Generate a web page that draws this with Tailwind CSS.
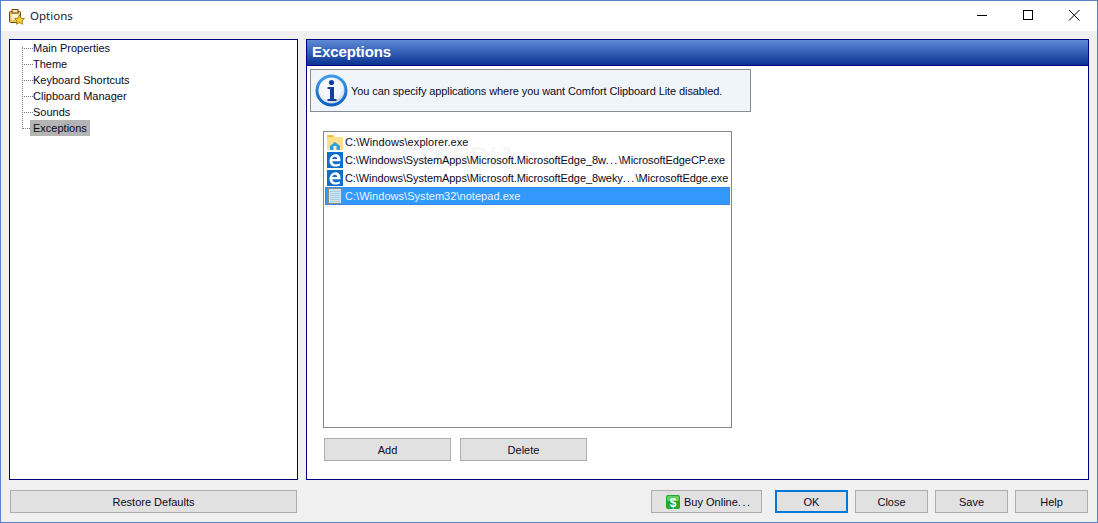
<!DOCTYPE html>
<html>
<head>
<meta charset="utf-8">
<script src="https://cdn.jsdelivr.net/npm/@tailwindcss/browser@4"></script>
</head>
<body class="m-0">
<div class="w-[1098px] h-[523px] flex flex-col overflow-hidden bg-[#f0f0f0] border border-[#5a82c6] font-['Liberation_Sans',sans-serif] text-[11px] text-[#0a0a1e]">
  <div class="h-[30px] shrink-0 bg-white flex items-center pl-[7px]">
    <svg width="17" height="17" viewBox="0 0 17 17" class="mr-[5px] shrink-0">
      <rect x="1.5" y="3.5" width="11" height="11" rx="1" fill="#e8c465" stroke="#6e4a12"/>
      <rect x="4" y="1.5" width="6" height="3.5" fill="#f4e4a8" stroke="#6e4a12"/>
      <rect x="3.5" y="6" width="7" height="6" fill="#fbf3d0"/>
      <path d="M11.5 7l1.6 3.2 3.4.4-2.5 2.3.7 3.4-3.2-1.7-3.2 1.7.7-3.4-2.5-2.3 3.4-.4z" fill="#f6cf2e" stroke="#9a6d10" stroke-width=".8"/>
    </svg>
    <span class="text-[11.5px] text-[#1a1a2e] font-['Noto_Sans',sans-serif]">Options</span>
    <div class="ml-auto flex items-start h-[30px]">
      <svg width="46" height="30" viewBox="0 0 46 30"><path d="M18 14.5h10" stroke="#000"/></svg>
      <svg width="46" height="30" viewBox="0 0 46 30"><rect x="18.500" y="9.500" width="9" height="9" fill="none" stroke="#000"/></svg>
      <svg width="46" height="30" viewBox="0 0 46 30"><path d="M18 9l10.500 10.500M28.500 9L18 19.500" stroke="#000"/></svg>
    </div>
  </div>
  <div class="flex-1 flex flex-col pt-[8px] pl-[8px] pr-[8px] pb-[9px]">
    <div class="flex gap-[8px] h-[441px]">
      <div class="w-[289px] shrink-0 bg-white border border-[#000080] relative">
        <div class="absolute left-[12px] top-[7px] h-[80px] border-l border-dotted border-[#777]"></div>
        <div class="flex flex-col">
          <div class="h-[16px] flex items-center"><span class="w-[11px] ml-[12px] border-t border-dotted border-[#777]"></span><span>Main Properties</span></div>
          <div class="h-[16px] flex items-center"><span class="w-[11px] ml-[12px] border-t border-dotted border-[#777]"></span><span>Theme</span></div>
          <div class="h-[16px] flex items-center"><span class="w-[11px] ml-[12px] border-t border-dotted border-[#777]"></span><span>Keyboard Shortcuts</span></div>
          <div class="h-[16px] flex items-center"><span class="w-[11px] ml-[12px] border-t border-dotted border-[#777]"></span><span>Clipboard Manager</span></div>
          <div class="h-[16px] flex items-center"><span class="w-[11px] ml-[12px] border-t border-dotted border-[#777]"></span><span>Sounds</span></div>
          <div class="h-[16px] flex items-center"><span class="w-[8px] ml-[12px] border-t border-dotted border-[#777]"></span><span class="bg-[#b4b4b4] h-[16px] w-[60px] pl-[3px] flex items-center">Exceptions</span></div>
        </div>
      </div>
      <div class="flex-1 bg-white border border-[#000080] flex flex-col">
        <div class="h-[26px] shrink-0 bg-gradient-to-b from-[#5f8ad6] to-[#0a3192] border-b border-[#000080] flex items-center pl-[5px] text-white font-bold text-[15px] tracking-[-0.1px]">Exceptions</div>
        <div class="flex-1 flex flex-col pl-[3px] pt-[3px]">
          <div class="w-[441px] h-[43px] bg-[#f0f5fb] border border-[#8a8a94] flex items-center pl-[4px]">
            <svg width="33" height="33" viewBox="0 0 33 33" class="mr-[3px] shrink-0">
              <defs>
                <radialGradient id="g1" cx="45%" cy="40%" r="60%"><stop offset="0" stop-color="#ffffff"/><stop offset=".7" stop-color="#eef3fa"/><stop offset="1" stop-color="#a9c0dc"/></radialGradient>
                <linearGradient id="g2" x1="0" y1="0" x2="0" y2="1"><stop offset="0" stop-color="#3f9be8"/><stop offset="1" stop-color="#0f5fc0"/></linearGradient>
              </defs>
              <circle cx="16.500" cy="16.500" r="14.500" fill="url(#g1)" stroke="url(#g2)" stroke-width="3"/>
              <circle cx="16.500" cy="8.500" r="2.600" fill="#14409a"/>
              <path d="M12.500 13h6.500v12h2.500v2h-9v-2h2.500v-10h-2.500z" fill="#14409a"/>
            </svg>
            <span class="whitespace-nowrap tracking-[-0.09px] pt-[1px]">You can specify applications where you want Comfort Clipboard Lite disabled.</span>
          </div>
          <div class="ml-[13px] mt-[19px] w-[409px] h-[297px] border border-[#828790] bg-white relative p-[1px] overflow-hidden">
            <div class="absolute left-[38px] top-[12px] text-[27px] font-bold text-[#f7f7f7] leading-none">SOFTPEDIA</div>
            <div class="relative flex flex-col">
              <div class="h-[18px] flex items-center pl-[2px]">
                <svg width="16" height="16" viewBox="0 0 16 16" class="mr-[2px] shrink-0"><path d="M0 1h6l2 2h8v13H0z" fill="#fde08a"/><path d="M0 1h6l1 2H0z" fill="#f3bd45"/><path d="M3 12l5-4 5 4v4H3z" fill="#2f9ee0"/><rect x="6.500" y="12" width="3" height="4" fill="#fff3c4"/></svg>
                <span class="whitespace-nowrap tracking-[0.08px]">C:\Windows\explorer.exe</span>
              </div>
              <div class="h-[18px] flex items-center pl-[2px]">
                <svg width="16" height="16" viewBox="0 0 16 16" class="mr-[2px] shrink-0"><rect width="16" height="16" fill="#0f6fc6"/><path d="M13.500 9.200H5.300c.2 2 1.700 3.100 3.800 3.100 1.400 0 2.800-.4 3.800-1.100v2.300c-1.100.7-2.800 1.100-4.400 1.100-3.700 0-6-2.200-6-5.600 0-3.700 2.700-6.800 6.100-6.800 3.200 0 4.900 2.400 4.900 5.600zM10.100 7c0-1.400-.9-2.300-2.200-2.300-1.300 0-2.300.9-2.600 2.300z" fill="#fff" fill-rule="evenodd"/></svg>
                <span class="whitespace-nowrap tracking-[-0.08px]">C:\Windows\SystemApps\Microsoft.MicrosoftEdge_8w<span class="tracking-[1.2px]">...</span>\MicrosoftEdgeCP.exe</span>
              </div>
              <div class="h-[18px] flex items-center pl-[2px]">
                <svg width="16" height="16" viewBox="0 0 16 16" class="mr-[2px] shrink-0"><rect width="16" height="16" fill="#0f6fc6"/><path d="M13.500 9.200H5.300c.2 2 1.700 3.100 3.800 3.100 1.400 0 2.800-.4 3.800-1.100v2.300c-1.100.7-2.800 1.100-4.400 1.100-3.700 0-6-2.200-6-5.600 0-3.700 2.700-6.800 6.100-6.800 3.200 0 4.900 2.400 4.900 5.600zM10.100 7c0-1.400-.9-2.300-2.200-2.300-1.300 0-2.300.9-2.600 2.300z" fill="#fff" fill-rule="evenodd"/></svg>
                <span class="whitespace-nowrap tracking-[-0.08px]">C:\Windows\SystemApps\Microsoft.MicrosoftEdge_8weky<span class="tracking-[1.2px]">...</span>\MicrosoftEdge.exe</span>
              </div>
              <div class="h-[18px] flex items-center pl-[1px] bg-[#3399ff] border border-dotted border-[#a06a20] text-[#eaf4ff]">
                <svg width="16" height="16" viewBox="0 0 16 16" class="mr-[2px] shrink-0"><rect x="1.500" y="0.500" width="13" height="15" fill="#cfe3f3" stroke="#8a8f78"/><path d="M3 3.500h10M3 5.500h10M3 7.500h10M3 9.500h10M3 11.500h10M3 13.500h10" stroke="#a9cce6"/></svg>
                <span class="whitespace-nowrap tracking-[0.04px]">C:\Windows\System32\notepad.exe</span>
              </div>
            </div>
          </div>
          <div class="ml-[14px] mt-[10px] flex gap-[9px]">
            <button class="w-[127px] h-[23px] pt-[1px] bg-[#e1e1e1] border border-[#adadad]">Add</button>
            <button class="w-[127px] h-[23px] pt-[1px] bg-[#e1e1e1] border border-[#adadad]">Delete</button>
          </div>
        </div>
      </div>
    </div>
    <div class="flex mt-[10px] h-[23px] pl-[1px]">
      <button class="w-[287px] pt-[1px] bg-[#e1e1e1] border border-[#adadad]">Restore Defaults</button>
      <div class="ml-auto flex pr-[1px]">
        <button class="w-[111px] bg-[#e1e1e1] border border-[#adadad] flex items-center justify-start pl-[14px] gap-[4px]">
          <svg width="14" height="14" viewBox="0 0 14 14" class="shrink-0"><rect width="14" height="14" rx="2" fill="#22a82a"/><rect x="1" y="1" width="12" height="5" rx="1" fill="#5fd05a"/><text x="7" y="11.500" font-size="12" font-weight="bold" text-anchor="middle" fill="#fff" font-family="Liberation Sans">$</text></svg>
          <span class="pt-[1px]">Buy Online<span class="tracking-[1.6px]">...</span></span>
        </button>
        <button class="w-[73px] ml-[13px] pt-[1px] bg-[#e1e1e1] border-2 border-[#0078d7]">OK</button>
        <button class="w-[73px] ml-[7px] pt-[1px] bg-[#e1e1e1] border border-[#adadad]">Close</button>
        <button class="w-[73px] ml-[7px] pt-[1px] bg-[#e1e1e1] border border-[#adadad]">Save</button>
        <button class="w-[73px] ml-[7px] pt-[1px] bg-[#e1e1e1] border border-[#adadad]">Help</button>
      </div>
    </div>
  </div>
</div>
</body>
</html>
